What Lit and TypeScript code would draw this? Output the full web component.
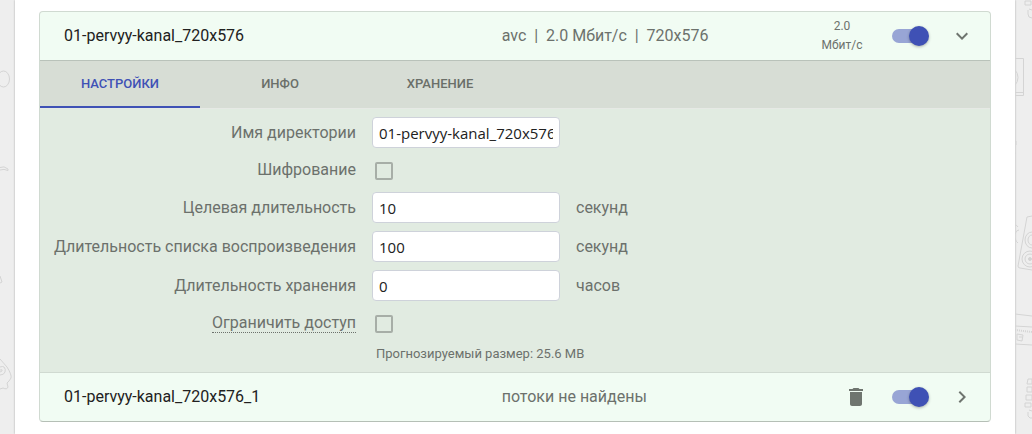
import { LitElement, html, css, nothing } from "lit";
import { customElement, property, state } from "lit/decorators.js";

@customElement("icon-button")
class IconButton extends LitElement {
  @property() path = "";
  @property() label = "";

  static styles = css`
    :host { display: block; }
    .button {
      display: block; padding: 0; border: 0; background: none;
      color: #6f756f; cursor: pointer;
    }
    .icon { display: block; width: 24px; height: 24px; fill: currentColor; }
  `;

  render() {
    return html`<button class="button" type="button" aria-label=${this.label}>
      <svg class="icon" viewBox="0 0 24 24"><path d=${this.path}></path></svg>
    </button>`;
  }
}

@customElement("toggle-switch")
class ToggleSwitch extends LitElement {
  @property({ type: Boolean }) on = false;
  @property() label = "";

  static styles = css`
    :host { display: flex; align-items: center; width: 38px; height: 20px; }
    .switch {
      appearance: none; position: relative; width: 36px; height: 14px; margin: 0;
      border-radius: 7px; background: #b5bdb6; cursor: pointer;
    }
    .switch:checked { background: #98a5d5; }
    .switch::after {
      content: ""; position: absolute; top: -3px; left: 0;
      width: 20px; height: 20px; border-radius: 50%; background: #fafafa;
      box-shadow: 0 1px 3px rgba(0, 0, 0, 0.3);
    }
    .switch:checked::after { left: 17px; background: #3f51b5; }
  `;

  render() {
    return html`<input class="switch" type="checkbox" role="switch"
      aria-label=${this.label} .checked=${this.on} />`;
  }
}

const ICONS = {
  down: "M16.59 8.59L12 13.17 7.41 8.59 6 10l6 6 6-6z",
  right: "M10 6L8.59 7.41 13.17 12l-4.58 4.59L10 18l6-6z",
  trash: "M6 19c0 1.1.9 2 2 2h8c1.1 0 2-.9 2-2V7H6v12zM19 4h-3.5l-1-1h-5l-1 1H5v2h14V4z",
};

type Field = { id: string; label: string; value?: string; unit?: string; hint?: boolean };

const FIELDS: Field[] = [
  { id: "dir", label: "Имя директории", value: "01-pervyy-kanal_720x576" },
  { id: "crypt", label: "Шифрование" },
  { id: "target", label: "Целевая длительность", value: "10", unit: "секунд" },
  { id: "playlist", label: "Длительность списка воспроизведения", value: "100", unit: "секунд" },
  { id: "storage", label: "Длительность хранения", value: "0", unit: "часов" },
  { id: "access", label: "Ограничить доступ", hint: true },
];

@customElement("app-root")
class AppRoot extends LitElement {
  @state() private tab = 0;

  static styles = css`
    :host {
      display: grid;
      grid-template-columns: 15px minmax(0, 1fr) 17px;
      min-height: 100vh;
      background: #eeeeee;
      color: #6c716c;
      font: 16px/24px Roboto, sans-serif;
    }
    * { box-sizing: border-box; }
    .gutter { overflow: hidden; }
    .doodle { display: block; fill: none; stroke: #d4d4d4; stroke-width: 1; }
    .page {
      padding: 11px 24px 12px;
      background: #ffffff;
      box-shadow: 0 0 2px rgba(0, 0, 0, 0.3);
    }
    .card {
      border: 1px solid #d0dad1;
      border-bottom-color: #b5bfb6;
      border-radius: 4px;
      overflow: hidden;
      background: #f1fcf3;
    }
    .row {
      display: grid;
      grid-template-columns: 11fr 8fr auto;
      align-items: center;
      height: 48px;
      padding: 0 16px 0 24px;
    }
    .name { color: #212121; }
    .actions { display: flex; align-items: center; gap: 20px; }
    .slot {
      display: flex; justify-content: flex-end;
      width: 52px; padding-right: 4px;
    }
    .rate {
      width: 52px; padding-right: 8px;
      font-size: 12px; line-height: 19px; text-align: center;
    }
    .tabs {
      display: flex;
      border-top: 1px solid #b9c2ba;
      border-bottom: 1px solid #e6e9e5;
      background: #d7ddd5;
    }
    .tab {
      width: 160px; height: 47px; padding: 0;
      border: 0; border-bottom: 2px solid transparent;
      background: none; color: #6a6f69;
      font: 500 13px/20px Roboto, sans-serif;
      text-transform: uppercase; cursor: pointer;
    }
    .tab.active { color: #3f51b5; border-bottom-color: #3f51b5; }
    .panel {
      display: flex; flex-direction: column; gap: 8px;
      padding: 8px 2px 9px 0;
      border-bottom: 1px solid #d0dad1;
      background: #e1ebe1;
    }
    .field {
      display: grid; grid-template-columns: 1fr 2fr;
      align-items: center;
      min-height: 28px;
    }
    .caption { text-align: right; white-space: nowrap; }
    .hint { border-bottom: 1px dotted #6c716c; }
    .control { display: flex; align-items: center; gap: 16px; padding-left: 16px; }
    .text {
      width: 188px; height: 31px; padding: 0 6px;
      border: 1px solid #ced2da; border-radius: 4px;
      background: #ffffff; color: #212121;
      font: 15px/20px "Open Sans", sans-serif;
    }
    .check {
      appearance: none; width: 18px; height: 18px; margin: 2px 3px 0;
      border: 2px solid #a7aea7; border-radius: 2px;
    }
    .check:checked { background: #3f51b5; border-color: #3f51b5; }
    .summary { display: grid; grid-template-columns: 1fr 2fr; }
    .note { padding-left: 20px; grid-column: 2; font-size: 13px; line-height: 18px; }
    .info { white-space: pre; }
  `;

  private renderField(f: Field) {
    return html`<div class="field">
      <label class="caption" for=${f.id}><span class=${f.hint ? "hint" : ""}>${f.label}</span></label>
      <div class="control">
        ${f.value === undefined
          ? html`<input class="check" id=${f.id} type="checkbox" />`
          : html`<input class="text" id=${f.id} type="text" .value=${f.value} />`}
        ${f.unit ? html`<span>${f.unit}</span>` : nothing}
      </div>
    </div>`;
  }

  render() {
    return html`
      <div class="gutter">
        <svg class="doodle" width="15" height="434" viewBox="0 0 15 434" aria-hidden="true">
          <ellipse cx="3.5" cy="79" rx="6" ry="8"></ellipse>
          <path d="M0 167.500q4-2 8 1.500l0 1.500q-4-2-8-.5M0 276l2 6-2 1"></path>
          <path d="M0 359l7 8q5 8 4 11l-2 3-2 2 1 4q-1 3-5 1l-3 1"></path>
          <path d="M0 367q3-1 4 0 2 2 1 5-1 3-5 3M0 370q3-1 2 1l-2 1"></path>
        </svg>
      </div>
      <main class="page">
        <div class="card">
          <div class="row">
            <span class="name">01-pervyy-kanal_720x576</span>
            <span class="info">avc  |  2.0 Мбит/с  |  720x576</span>
            <div class="actions">
              <div class="rate">2.0 Мбит/с</div>
              <toggle-switch on label="01-pervyy-kanal_720x576"></toggle-switch>
              <icon-button path=${ICONS.down} label="Свернуть"></icon-button>
            </div>
          </div>
          <div class="tabs" role="tablist">
            ${["Настройки", "Инфо", "Хранение"].map(
              (t, i) => html`<button class="tab ${this.tab === i ? "active" : ""}" type="button"
                role="tab" aria-selected=${this.tab === i} @click=${() => (this.tab = i)}>${t}</button>`
            )}
          </div>
          <div class="panel">
            ${FIELDS.map((f) => this.renderField(f))}
            <div class="summary"><span class="note">Прогнозируемый размер: 25.6 MB</span></div>
          </div>
          <div class="row">
            <span class="name">01-pervyy-kanal_720x576_1</span>
            <span class="info">потоки не найдены</span>
            <div class="actions">
              <div class="slot"><icon-button path=${ICONS.trash} label="Удалить"></icon-button></div>
              <toggle-switch on label="01-pervyy-kanal_720x576_1"></toggle-switch>
              <icon-button path=${ICONS.right} label="Развернуть"></icon-button>
            </div>
          </div>
        </div>
      </main>
      <div class="gutter">
        <svg class="doodle" width="17" height="434" viewBox="0 0 17 434" aria-hidden="true">
          <path d="M10 1h6v4h-6zM14 9l3 1M13 10v4l1 3 3 1M0 58.500h8.500v37H0M0 92.500h8.500M0 70q3 3 3 7.500t-3 7.500"></path>
          <path d="M0 141h1v4M0 153h1M0 225q2 0 3 2M0 234q1-4 4-4M0 238q1 4 3 5"></path>
          <path d="M17 216l-5 1-9 49q0 2 2 2l12 2"></path>
          <ellipse cx="17" cy="240" rx="7" ry="8"></ellipse><ellipse cx="17" cy="240" rx="4" ry="5"></ellipse>
          <circle cx="15" cy="259" r="8"></circle><circle cx="15" cy="259" r="5"></circle><circle cx="15" cy="259" r="1.500" fill="#d3d3d3"></circle>
          <path d="M0 314l17 2M0 326l17 1M0 344l17 1M2 334l6 1-1 6-5-1zM4 337h3"></path>
          <path d="M0 330l17 2" stroke-dasharray="1 1" stroke-width="2"></path>
          <path d="M13 379h4v5h-5zM12 387h5v5h-5zM11 395h6v5h-6zM10 403h6v4h-6zM14 410l3 1M13 412v4l2 2h2"></path>
        </svg>
      </div>
    `;
  }
}
